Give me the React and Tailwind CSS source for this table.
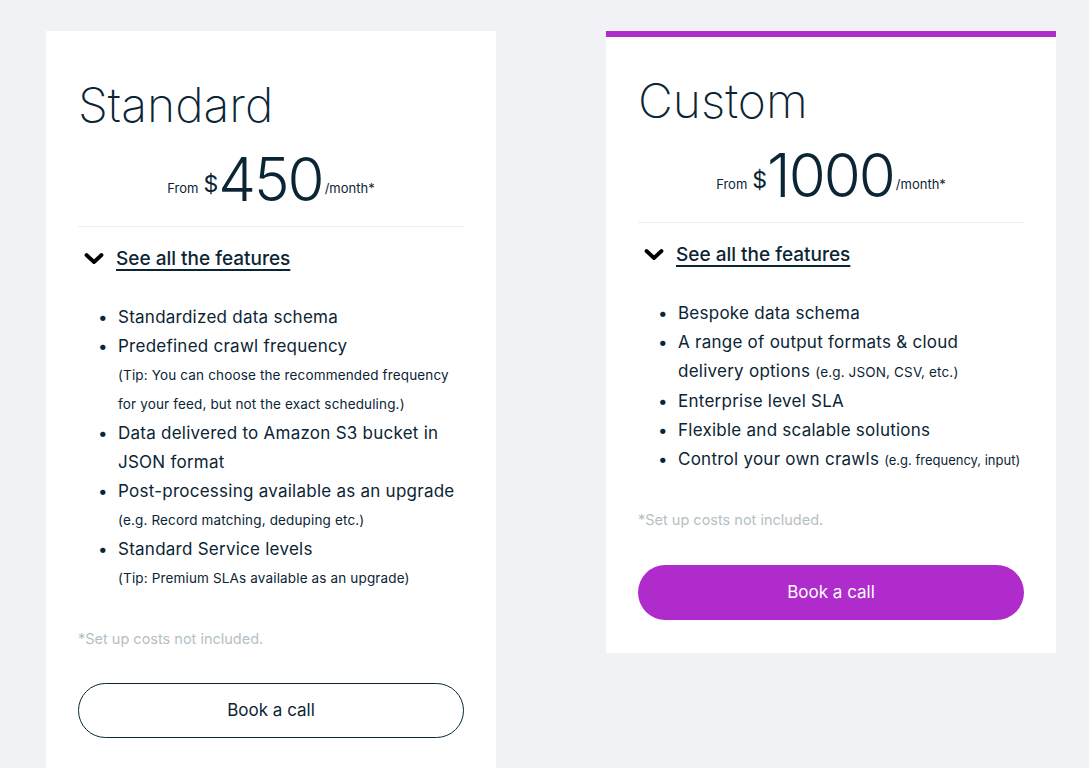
import React from "react";

const navy = "text-[#0b2535]";

function Chevron() {
  return (
    <svg width="20" height="14" viewBox="0 0 20 14" className="shrink-0">
      <path d="M2.5 3l7.5 7 7.5-7" fill="none" stroke="#000" strokeWidth="3.8" strokeLinecap="round" strokeLinejoin="round" />
    </svg>
  );
}

function Price({ amount }) {
  return (
    <div className={`flex items-baseline justify-center ${navy}`}>
      <span className="text-[13px] mr-[5px] -translate-y-[8px]">From</span>
      <span className="text-[23px] -translate-y-[9px]">$</span>
      <span className="text-[60px] leading-none font-light tracking-[-2px] mr-[2px]">{amount}</span>
      <span className="text-[13px] -translate-y-[8px]">/month*</span>
    </div>
  );
}

function Features() {
  return (
    <div className="flex items-center gap-[12px] pl-[6px]">
      <Chevron />
      <span className={`text-[19px] font-medium underline underline-offset-[4px] decoration-[2px] ${navy}`}>
        See all the features
      </span>
    </div>
  );
}

function Bullet({ children, nowrap }) {
  return (
    <li className={nowrap ? "flex whitespace-nowrap" : "flex"}>
      <span className="w-[20px] shrink-0 text-[17px]">•</span>
      <div>{children}</div>
    </li>
  );
}

function Tip({ children }) {
  return <div className="text-[13.5px] tracking-[0.15px] leading-[29px]">{children}</div>;
}

export default function App() {
  return (
    <div
      className="bg-[#f0f2f6] flex items-start gap-[110px] pl-[46px] pt-[31px] overflow-hidden h-[768px]"
      style={{ fontFamily: "Inter, 'Liberation Sans', sans-serif" }}
    >
      {/* standard */}
      <div className="w-[450px] bg-white px-[32px] pt-[44px] pb-[40px] shrink-0">
        <h2 className={`text-[48px] font-extralight leading-[60px] ${navy}`}>Standard</h2>
        <div className="mt-[14px] pb-[15px] border-b border-[#eeeeee]">
          <Price amount="450" />
        </div>
        <div className="mt-[18px]">
          <Features />
        </div>
        <ul className={`mt-[30px] pl-[20px] text-[17px] tracking-[0.25px] leading-[29px] ${navy}`}>
          <Bullet>Standardized data schema</Bullet>
          <Bullet>
            Predefined crawl frequency
            <Tip>(Tip: You can choose the recommended frequency for your feed, but not the exact scheduling.)</Tip>
          </Bullet>
          <Bullet>Data delivered to Amazon S3 bucket in JSON format</Bullet>
          <Bullet>
            Post-processing available as an upgrade
            <Tip>(e.g. Record matching, deduping etc.)</Tip>
          </Bullet>
          <Bullet>
            Standard Service levels
            <Tip>(Tip: Premium SLAs available as an upgrade)</Tip>
          </Bullet>
        </ul>
        <p className="mt-[35px] text-[14.5px] text-[#b4c0c4]">*Set up costs not included.</p>
        <button className={`mt-[33px] w-full h-[55px] rounded-full border border-[#0b2535] text-[17px] ${navy}`}>
          Book a call
        </button>
      </div>

      {/* custom */}
      <div className="w-[450px] bg-white border-t-[6px] border-[#b02bcc] px-[32px] pt-[34px] pb-[33px] shrink-0">
        <h2 className={`text-[48px] font-extralight leading-[60px] ${navy}`}>Custom</h2>
        <div className="mt-[14px] pb-[15px] border-b border-[#eeeeee]">
          <Price amount="1000" />
        </div>
        <div className="mt-[18px]">
          <Features />
        </div>
        <ul className={`mt-[30px] pl-[20px] text-[17px] tracking-[0.25px] leading-[29px] ${navy}`}>
          <Bullet>Bespoke data schema</Bullet>
          <Bullet>
            A range of output formats &amp; cloud delivery options{" "}
            <span className="text-[13.5px] tracking-[0.15px]">(e.g. JSON, CSV, etc.)</span>
          </Bullet>
          <Bullet>Enterprise level SLA</Bullet>
          <Bullet>Flexible and scalable solutions</Bullet>
          <Bullet nowrap>
            Control your own crawls <span className="text-[13px] tracking-[0px]">(e.g. frequency, input)</span>
          </Bullet>
        </ul>
        <p className="mt-[34px] text-[14.5px] text-[#b4c0c4]">*Set up costs not included.</p>
        <button className="mt-[34px] w-full h-[55px] rounded-full bg-[#b02bcc] text-white text-[17px]">
          Book a call
        </button>
      </div>
    </div>
  );
}
